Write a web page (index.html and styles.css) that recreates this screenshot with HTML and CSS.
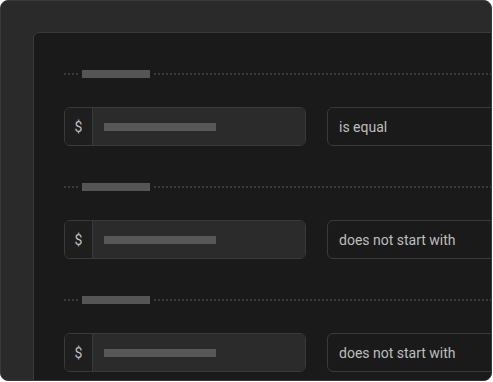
FILE: index.html
```html
<!DOCTYPE html>
<html>
<head>
<meta charset="utf-8">
<link rel="stylesheet" href="styles.css">
</head>
<body>
<div class="frame">
  <div class="panel">
    <div class="group">
      <div class="label"><span class="dots short"></span><span class="label-bar"></span><span class="dots long"></span></div>
      <div class="row">
        <div class="field"><span class="prefix">$</span><span class="field-body"><span class="field-bar"></span></span></div>
        <div class="select">is equal</div>
      </div>
    </div>
    <div class="group">
      <div class="label"><span class="dots short"></span><span class="label-bar"></span><span class="dots long"></span></div>
      <div class="row">
        <div class="field"><span class="prefix">$</span><span class="field-body"><span class="field-bar"></span></span></div>
        <div class="select">does not start with</div>
      </div>
    </div>
    <div class="group">
      <div class="label"><span class="dots short"></span><span class="label-bar"></span><span class="dots long"></span></div>
      <div class="row">
        <div class="field"><span class="prefix">$</span><span class="field-body"><span class="field-bar"></span></span></div>
        <div class="select">does not start with</div>
      </div>
    </div>
  </div>
</div>
</body>
</html>
```
FILE: styles.css
```css
html, body {
  margin: 0;
  padding: 0;
  background: #ffffff;
}
.frame {
  box-sizing: border-box;
  width: 492px;
  height: 381px;
  background: #2a2a2a;
  border: 1px solid #3a3a3a;
  border-radius: 8px;
  overflow: hidden;
  padding: 31px 0 0 32px;
  font-family: Roboto, "Noto Sans", sans-serif;
}
.panel {
  box-sizing: border-box;
  width: 560px;
  height: 400px;
  background: #1a1a1a;
  border: 1px solid #3a3a3a;
  border-radius: 6px 0 0 0;
  padding: 37px 0 0 30px;
  display: flex;
  flex-direction: column;
  gap: 37px;
}
.group {
  display: flex;
  flex-direction: column;
  gap: 29px;
}
.label {
  display: flex;
  align-items: center;
  height: 8px;
}
.dots {
  height: 2px;
  background: repeating-linear-gradient(to right, #3a3a3a 0 2px, transparent 2px 4px);
}
.dots.short {
  width: 16px;
}
.dots.long {
  flex: 1;
  margin-left: 4px;
}
.label-bar {
  width: 68px;
  height: 8px;
  margin-left: 2px;
  background: #555555;
}
.row {
  display: flex;
  gap: 21px;
}
.field {
  box-sizing: border-box;
  width: 242px;
  height: 39px;
  display: flex;
  border: 1px solid #3a3a3a;
  border-radius: 6px;
  overflow: hidden;
}
.prefix {
  width: 27px;
  background: #1e1e1e;
  border-right: 1px solid #3a3a3a;
  color: #bebebe;
  font-size: 14px;
  display: flex;
  align-items: center;
  justify-content: center;
}
.field-body {
  flex: 1;
  background: #2b2b2b;
  display: flex;
  align-items: center;
  padding-left: 11px;
}
.field-bar {
  width: 112px;
  height: 8px;
  background: #575757;
}
.select {
  box-sizing: border-box;
  width: 242px;
  height: 39px;
  border: 1px solid #3a3a3a;
  border-radius: 6px;
  background: #1a1a1a;
  color: #bebebe;
  font-size: 14px;
  display: flex;
  align-items: center;
  padding-left: 11px;
}
```
